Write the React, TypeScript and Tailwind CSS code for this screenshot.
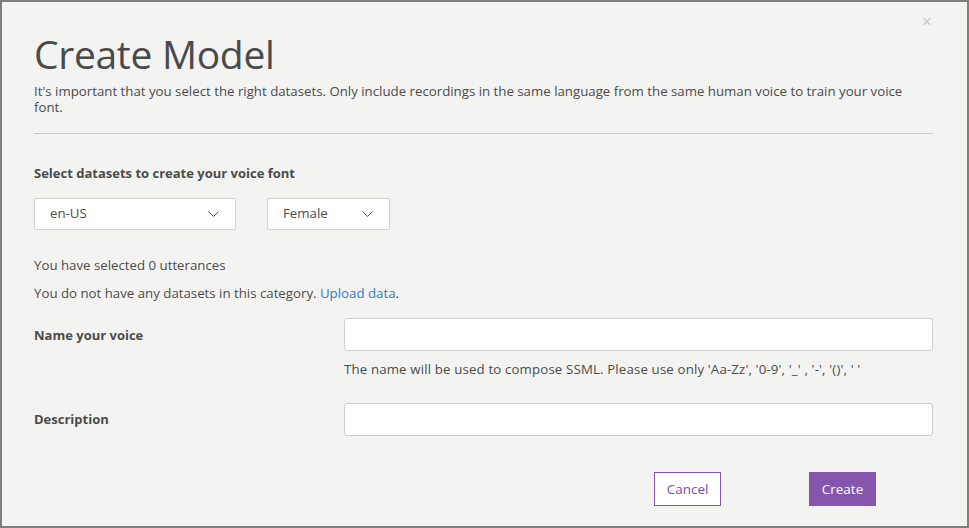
function Chevron() {
	return (
		<svg width="11" height="6" viewBox="0 0 11 6" fill="none" stroke="#555" strokeWidth="1">
			<path d="M0.5 0.5 L5.5 5.5 L10.5 0.5" />
		</svg>
	)
}

function App() {
	return (
		<div
			className="w-[969px] h-[528px] border-2 border-[#7f7f7f] bg-[#f3f4f2] text-[#4b4b4b] pl-[32px] pr-[34px] relative"
			style={{ fontFamily: '"Open Sans", "Noto Sans", sans-serif' }}
		>
			<button className="absolute right-[35px] top-[10px] text-[18px] leading-none text-[#c8c8c8]">×</button>
			<h1 className="pt-[29px] text-[39px] leading-[46px] font-normal tracking-[-0.3px] text-[#4a4a4a]">Create Model</h1>
			<p className="mt-[6px] text-[13.25px] leading-[16px]">
				It's important that you select the right datasets. Only include recordings in the same language from the same human voice to train your voice font.
			</p>
			<div className="mt-[18px] h-px bg-[#c9cac8]"></div>

			<div className="mt-[30px] text-[13px] font-bold">Select datasets to create your voice font</div>
			<div className="mt-[14px] flex gap-[31px]">
				<div className="w-[202px] h-[32px] bg-white border border-[#d2d2d2] rounded-[2px] flex items-center justify-between pl-[15px] pr-[16px] text-[13.25px]">
					<span>en-US</span>
					<Chevron />
				</div>
				<div className="w-[123px] h-[32px] bg-white border border-[#d2d2d2] rounded-[2px] flex items-center justify-between pl-[15px] pr-[16px] text-[13.25px]">
					<span>Female</span>
					<Chevron />
				</div>
			</div>

			<div className="mt-[26px] text-[13.25px]">You have selected 0 utterances</div>
			<div className="mt-[9px] text-[13.25px]">
				You do not have any datasets in this category. <a className="text-[#2f7bc4]">Upload data</a>.
			</div>

			<div className="mt-[14px] flex">
				<div className="w-[310px] pt-[8px] text-[13px] font-bold">Name your voice</div>
				<div className="flex-1">
					<div className="h-[33px] bg-white border border-[#cfcfcf] rounded-[3px]"></div>
					<div className="mt-[9px] text-[13.25px] tracking-[0.15px]">
						The name will be used to compose SSML. Please use only 'Aa-Zz', '0-9', '_' , '-', '()', ' '
					</div>
				</div>
			</div>

			<div className="mt-[23px] flex">
				<div className="w-[310px] pt-[7px] text-[13px] font-bold">Description</div>
				<div className="flex-1">
					<div className="h-[33px] bg-white border border-[#cfcfcf] rounded-[3px]"></div>
				</div>
			</div>

			<div className="mt-[36px] flex pl-[620px] gap-[88px]">
				<button className="w-[67px] h-[34px] bg-white border border-[#8656b0] text-[#7a4fa6] text-[13.5px]">Cancel</button>
				<button className="w-[67px] h-[34px] bg-[#8656ae] text-white text-[13.5px]">Create</button>
			</div>
		</div>
	)
}

export default App
